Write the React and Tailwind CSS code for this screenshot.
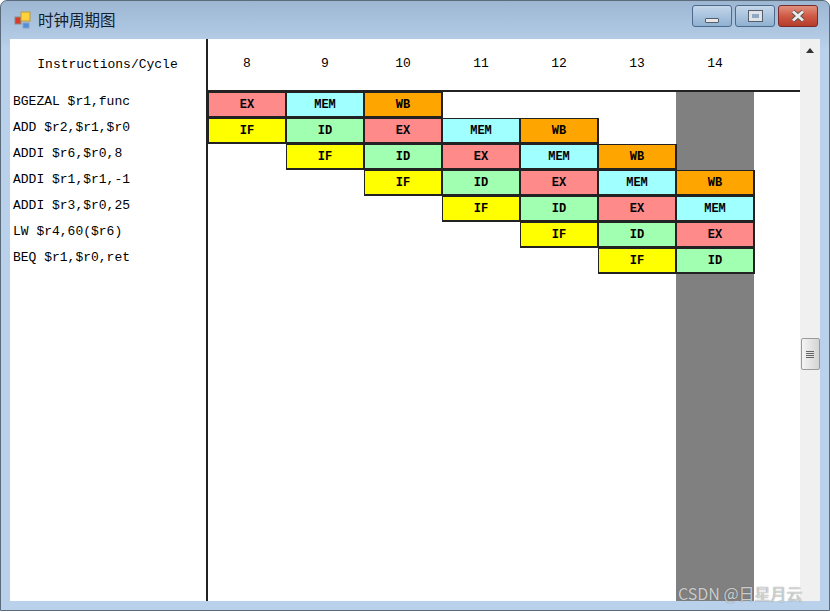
import React from "react";

const colors = {
  IF: "bg-[#ffff00]",
  ID: "bg-[#a0ffb0]",
  EX: "bg-[#ff8a8a]",
  MEM: "bg-[#a0ffff]",
  WB: "bg-[#ffa500]",
};

const cycles = [8, 9, 10, 11, 12, 13, 14];

const rows = [
  { name: "BGEZAL $r1,func", start: 0, stages: ["EX", "MEM", "WB"] },
  { name: "ADD $r2,$r1,$r0", start: 0, stages: ["IF", "ID", "EX", "MEM", "WB"] },
  { name: "ADDI $r6,$r0,8", start: 1, stages: ["IF", "ID", "EX", "MEM", "WB"] },
  { name: "ADDI $r1,$r1,-1", start: 2, stages: ["IF", "ID", "EX", "MEM", "WB"] },
  { name: "ADDI $r3,$r0,25", start: 3, stages: ["IF", "ID", "EX", "MEM"] },
  { name: "LW $r4,60($r6)", start: 4, stages: ["IF", "ID", "EX"] },
  { name: "BEQ $r1,$r0,ret", start: 5, stages: ["IF", "ID"] },
];

const CaptionButton = ({ width, className, children }) => (
  <div
    className={`h-[22px] rounded-[3px] border border-[#4d6a8c] flex items-center justify-center ${width} ${className}`}
  >
    {children}
  </div>
);

export default function App() {
  return (
    <div className="w-[830px] h-[612px] bg-white overflow-hidden font-['Liberation_Mono',monospace] text-[13px] text-black">
      <div className="h-[611px] flex flex-col rounded-t-[7px] border border-[#5b6b7c] bg-gradient-to-b from-[#9db7d3] to-[#b9d1ea] to-[8%]">
        {/* title bar */}
        <div className="h-[38px] flex items-center justify-between pl-[13px] pr-[11px] shrink-0">
          <div className="flex items-center gap-[6px]">
            <svg width="18" height="18" viewBox="0 0 18 18">
              <rect x="1" y="6" width="6" height="7" fill="#d83a2c" stroke="#8c8c80" />
              <rect x="7" y="1" width="9" height="9" fill="#ffd23c" stroke="#b89a40" />
              <rect x="9" y="12" width="6" height="5" fill="#4f8fe0" stroke="#8aa0c0" />
            </svg>
            <span className="font-['Noto_Sans_CJK_SC',sans-serif] text-[15.5px] text-[#10202f]">时钟周期图</span>
          </div>
          <div className="flex gap-[3px] mt-[-8px]">
            <CaptionButton width="w-[40px]" className="bg-gradient-to-b from-[#c5d7ea] via-[#a9c3de] to-[#8fb0d0]">
              <div className="mt-[8px] w-[14px] h-[5px] bg-[#e8e8e8] border border-[#555f6c] rounded-[1px]" />
            </CaptionButton>
            <CaptionButton width="w-[40px]" className="bg-gradient-to-b from-[#c5d7ea] via-[#a9c3de] to-[#8fb0d0]">
              <div className="w-[13px] h-[10px] border-[3px] border-[#dfe3e8] outline outline-1 outline-[#555f6c] bg-[#8fa9c4]" />
            </CaptionButton>
            <CaptionButton width="w-[40px]" className="border-[#7a2a2a] bg-gradient-to-b from-[#e0907f] via-[#cf5a45] to-[#b53c2c]">
              <svg width="16" height="12" viewBox="0 0 16 12">
                <path d="M3 1.5L13 10.5M13 1.5L3 10.5" stroke="#4a4a4a" strokeWidth="4.4" />
                <path d="M3 1.5L13 10.5M13 1.5L3 10.5" stroke="#ececec" strokeWidth="3" />
              </svg>
            </CaptionButton>
          </div>
        </div>

        {/* client area */}
        <div className="flex-1 min-h-0 mx-[9px] mb-[9px] flex bg-white">
          <div className="flex-1 min-w-0 flex">
            <div className="w-[196px] shrink-0 border-r-0 flex flex-col">
              <div className="h-[52px] flex items-center justify-center pr-[1px] whitespace-pre">Instructions/Cycle</div>
              <div className="flex flex-col pl-[3px]">
                {rows.map((row) => (
                  <div key={row.name} className="h-[26px] pb-[4px] flex items-center whitespace-pre">
                    {row.name}
                  </div>
                ))}
              </div>
            </div>

            <div className="flex-1 min-w-0 flex flex-col border-l-2 border-[#222]">
              <div className="h-[53px] shrink-0 border-b-2 border-[#222] flex">
                {cycles.map((c) => (
                  <div key={c} className="w-[78px] flex items-center justify-center pb-[1px]">
                    {c}
                  </div>
                ))}
              </div>
              <div className="flex-1 min-h-0 grid grid-cols-[repeat(7,78px)] grid-rows-[repeat(7,26px)_1fr]">
                <div className="col-start-7 row-start-1 row-end-9 bg-[#808080]" />
                {rows.map((row, r) =>
                  row.stages.map((s, i) => (
                    <div
                      key={r + s}
                      className={`border border-[#222] border-b-2 border-r-2 -mr-[1px] flex items-center justify-center text-[12px] font-bold ${colors[s]}`}
                      style={{ gridRowStart: r + 1, gridColumnStart: row.start + i + 1 }}
                    >
                      {s}
                    </div>
                  ))
                )}
              </div>
            </div>
          </div>

          {/* scrollbar */}
          <div className="w-[20px] shrink-0 bg-[#f0f0f0] flex flex-col items-center">
            <div className="h-[17px] pt-[9px]">
              <div className="w-0 h-0 border-x-[4px] border-x-transparent border-b-[5px] border-b-[#333]" />
            </div>
            <div className="mt-[282px] w-[19px] h-[32px] rounded-[2px] border border-[#9a9a9a] bg-gradient-to-r from-[#f4f4f4] to-[#d4d4d4] flex flex-col items-center justify-center gap-[1px]">
              <div className="w-[8px] h-[1px] bg-[#666]" />
              <div className="w-[8px] h-[1px] bg-[#666]" />
              <div className="w-[8px] h-[1px] bg-[#666]" />
              <div className="w-[8px] h-[1px] bg-[#666]" />
            </div>
          </div>
        </div>
      </div>

      {/* watermark */}
      <div className="absolute left-[678px] top-[583px] font-['Noto_Sans_CJK_SC',sans-serif] text-[16px] leading-[20px] text-white/70 [text-shadow:0_0_1px_#555] whitespace-pre">
        CSDN @日星月云
      </div>
    </div>
  );
}
